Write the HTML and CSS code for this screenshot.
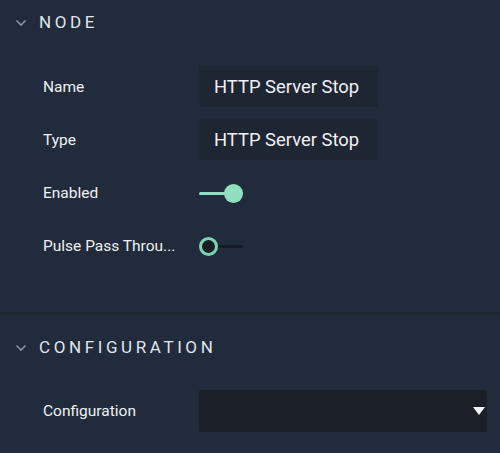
FILE: index.html
```html
<!DOCTYPE html>
<html>
<head>
<meta charset="utf-8">
<link rel="stylesheet" href="styles.css">
</head>
<body>
<div class="panel">
  <section class="section node">
    <div class="header">
      <svg class="chev" width="12" height="8" viewBox="0 0 12 8"><path d="M1.5 1.5 L6 6 L10.5 1.5" fill="none" stroke="#8a93a3" stroke-width="1.6"/></svg>
      <span class="title">NODE</span>
    </div>
    <div class="rows">
      <div class="row"><span class="label">Name</span><div class="input">HTTP Server Stop</div></div>
      <div class="row"><span class="label">Type</span><div class="input">HTTP Server Stop</div></div>
      <div class="row small"><span class="label">Enabled</span><div class="toggle on"><span class="track"></span><span class="knob"></span></div></div>
      <div class="row small"><span class="label">Pulse Pass Throu...</span><div class="toggle off"><span class="track"></span><span class="knob"></span></div></div>
    </div>
  </section>
  <section class="section config">
    <div class="header">
      <svg class="chev" width="12" height="8" viewBox="0 0 12 8"><path d="M1.5 1.5 L6 6 L10.5 1.5" fill="none" stroke="#8a93a3" stroke-width="1.6"/></svg>
      <span class="title">CONFIGURATION</span>
    </div>
    <div class="rows">
      <div class="row"><span class="label">Configuration</span><div class="select"><span class="arrow"></span></div></div>
    </div>
  </section>
</div>
</body>
</html>
```
FILE: styles.css
```css
html, body { margin: 0; padding: 0; }
body {
  background: #222b3b;
  font-family: Roboto, "Liberation Sans", sans-serif;
  color: #e6eaef;
  width: 500px;
  height: 453px;
  overflow: hidden;
}
.panel { display: flex; flex-direction: column; }
.section.node {
  padding-bottom: 46px;
  border-bottom: 2px solid #1c2331;
}
.header {
  display: flex;
  align-items: center;
  height: 44px;
  padding-left: 15px;
}
.config .header { margin-top: 11px; }
.chev { margin-right: 12px; margin-top: 1px; }
.title {
  font-size: 17px;
  letter-spacing: 3.6px;
  color: #dfe5ec;
  font-weight: 400;
}
.rows { display: flex; flex-direction: column; padding-left: 43px; }
.node .rows { margin-top: 22px; gap: 12px; }
.config .rows { margin-top: 21px; }
.row { display: flex; align-items: center; height: 41px; }
.label {
  width: 156px;
  font-size: 15.5px;
  color: #eef1f4;
  white-space: nowrap;
}
.input {
  width: 164px;
  height: 41px;
  padding-left: 15px;
  box-sizing: content-box;
  background: #1e2533;
  border-radius: 2px;
  display: flex;
  align-items: center;
  font-size: 18.4px;
  color: #eef1f5;
}
.toggle { position: relative; width: 45px; height: 22px; margin-top: 2px; }
.track {
  position: absolute; left: 0; right: 1px; top: 9px; height: 3px;
  border-radius: 2px;
}
.on .track { background: #8fe0c0; }
.off .track { background: #161c26; left: 10px; }
.knob {
  position: absolute; top: 1px; width: 19px; height: 19px; border-radius: 50%;
  box-sizing: border-box;
}
.on .knob { left: 25px; background: #8fe0c0; }
.off .knob { left: 0; background: #171c25; border: 3px solid #7fd2b2; }
.select {
  position: relative;
  width: 288px;
  height: 42px;
  background: #1a1f28;
  border-radius: 2px;
}
.arrow {
  position: absolute;
  right: 2px; top: 17px;
  width: 0; height: 0;
  border-left: 6px solid transparent;
  border-right: 6px solid transparent;
  border-top: 8px solid #f4f5f7;
}
```
